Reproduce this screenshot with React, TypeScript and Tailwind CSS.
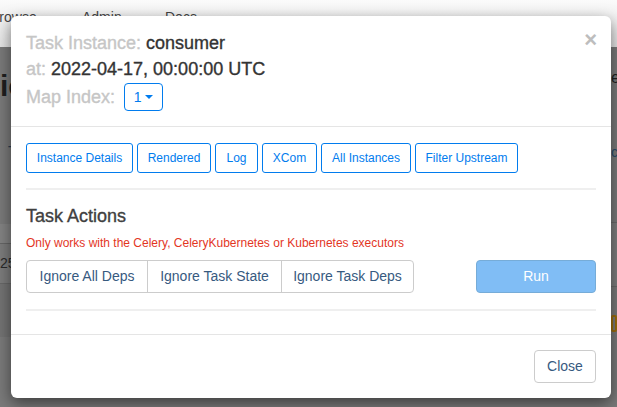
import React from "react";

const Caret = ({ color }: { color: string }) => (
  <span
    className="inline-block w-0 h-0 border-x-[4px] border-x-transparent border-t-[4px]"
    style={{ borderTopColor: color }}
  />
);

export default function App() {
  const tabs: { label: string; w: string }[] = [
    { label: "Instance Details", w: "w-[107px]" },
    { label: "Rendered", w: "w-[74px]" },
    { label: "Log", w: "w-[43px]" },
    { label: "XCom", w: "w-[55px]" },
    { label: "All Instances", w: "w-[90px]" },
    { label: "Filter Upstream", w: "w-[103px]" },
  ];
  return (
    <div className="relative w-[617px] h-[407px] overflow-hidden bg-[#7a7a7a] font-['Liberation_Sans',Arial,sans-serif]">
      {/* navbar */}
      <nav className="h-[47px] bg-gradient-to-b from-[#fbfbfb] to-[#e4e4e4] flex items-start pt-[7px] text-[14px] text-[#444]">
        <div className="w-[92px] -ml-[10px] flex items-center gap-[3px]">
          <span>Browse</span>
          <Caret color="#b48cb8" />
        </div>
        <div className="w-[83px] flex items-center gap-[3px]">
          <span>Admin</span>
          <Caret color="#b48cb8" />
        </div>
        <div className="flex items-center gap-[3px]">
          <span>Docs</span>
          <Caret color="#b48cb8" />
        </div>
      </nav>

      {/* dimmed page */}
      <div className="flex h-[360px]">
        <div className="w-[11px] overflow-hidden flex flex-col">
          <div className="mt-[24px] h-[30px] text-[30px] leading-[30px] font-bold text-[#1f1f1f] whitespace-nowrap">ic</div>
          <div className="mt-[42px] h-[16px] pl-[8px] text-[14px] leading-[16px] text-[#2c3d52]">T</div>
          <div className="mt-[65px] h-[20px] bg-[#838383] border-b border-[#666]" />
          <div className="h-[40px] flex items-center text-[14px] text-[#2a2a2a] bg-[#7c7c7c] border-b border-[#686868]">25</div>
          <div className="h-[53px] bg-[#737373]" />
        </div>
        <div className="flex-1" />
        <div className="w-[6px] overflow-hidden flex flex-col">
          <div className="mt-[22px] h-[18px] text-[16px] leading-[18px] text-[#1f1f1f]">e</div>
          <div className="mt-[57px] h-[16px] text-[14px] leading-[16px] text-[#2b4a6b] whitespace-nowrap">co</div>
          <div className="mt-[62px] h-[65px] border-y border-[#6a6a6a] bg-[#7e7e7e]" />
          <div className="mt-[28px] h-[17px] border-[2px] border-[#9c6c0c] rounded-[2px]" />
        </div>
      </div>

      {/* modal */}
      <div className="absolute left-[11px] top-[16px] w-[600px] h-[382px] bg-white rounded-[6px] shadow-[0_5px_15px_rgba(0,0,0,0.5)] flex flex-col">
        {/* header */}
        <div className="relative px-[15px] pt-[15px] pb-[15px] border-b border-[#e5e5e5] text-[18px] [-webkit-text-stroke:0.35px]">
          <span className="absolute right-[14px] top-[13px] text-[22px] leading-[22px] font-bold text-[#bdbdbd] [-webkit-text-stroke:0px]">×</span>
          <div className="h-[25px] flex items-center">
            <span className="text-[#c6c6c6]">Task Instance:&nbsp;</span>
            <span className="text-[#333]">consumer</span>
          </div>
          <div className="h-[26px] flex items-center">
            <span className="text-[#c6c6c6]">at:&nbsp;</span>
            <span className="text-[#333]">2022-04-17, 00:00:00 UTC</span>
          </div>
          <div className="mt-[1px] h-[28px] flex items-center">
            <span className="text-[#c6c6c6]">Map Index:</span>
            <button className="ml-[9px] w-[39px] h-[28px] border border-[#017cee] rounded-[4px] flex items-center justify-center gap-[4px] text-[14px] text-[#017cee] [-webkit-text-stroke:0px]">
              <span>1</span>
              <Caret color="#017cee" />
            </button>
          </div>
        </div>

        {/* body */}
        <div className="px-[15px] pt-[16px] flex-1">
          <div className="flex gap-[4px]">
            {tabs.map((t) => (
              <button
                key={t.label}
                className={`${t.w} h-[30px] border border-[#017cee] rounded-[3px] text-[12px] text-[#017cee] flex items-center justify-center whitespace-nowrap`}
              >
                {t.label}
              </button>
            ))}
          </div>
          <div className="mt-[15px] h-[2px] bg-[#efefef]" />
          <div className="mt-[16px] h-[20px] flex items-center text-[18px] text-[#404040] [-webkit-text-stroke:0.35px]">Task Actions</div>
          <div className="mt-[8px] h-[18px] flex items-center text-[12px] text-[#e3361f] whitespace-nowrap">
            Only works with the Celery, CeleryKubernetes or Kubernetes executors
          </div>
          <div className="mt-[8px] flex justify-between items-center">
            <div className="flex border border-[#cccccc] rounded-[4px] h-[33px] text-[14px] text-[#375a7f]">
              <div className="w-[120px] flex items-center justify-center">Ignore All Deps</div>
              <div className="w-[134px] flex items-center justify-center border-l border-[#cccccc]">Ignore Task State</div>
              <div className="w-[132px] flex items-center justify-center border-l border-[#cccccc]">Ignore Task Deps</div>
            </div>
            <button className="w-[120px] h-[33px] bg-[#80bdf5] border border-[#76acd8] rounded-[4px] text-white text-[14px] flex items-center justify-center">
              Run
            </button>
          </div>
          <div className="mt-[16px] h-[2px] bg-[#efefef]" />
        </div>

        {/* footer */}
        <div className="border-t border-[#e5e5e5] px-[15px] pt-[15px] pb-[15px] flex justify-end">
          <button className="w-[62px] h-[33px] border border-[#cccccc] rounded-[4px] text-[14px] text-[#375a7f] flex items-center justify-center bg-white">
            Close
          </button>
        </div>
      </div>
    </div>
  );
}
